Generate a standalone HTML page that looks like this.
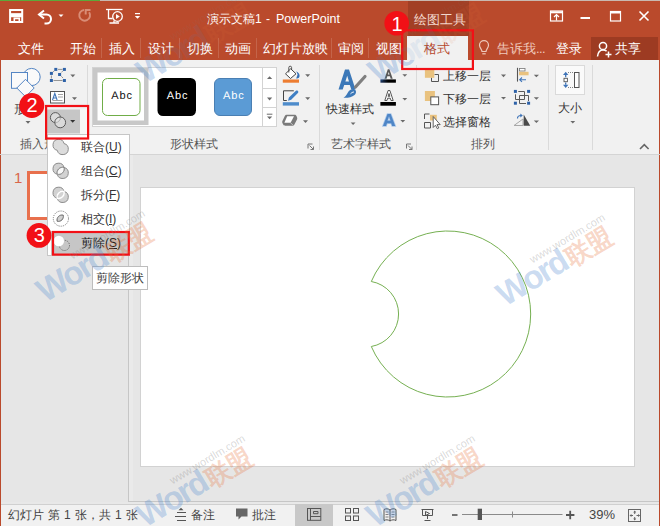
<!DOCTYPE html>
<html><head><meta charset="utf-8">
<style>
*{margin:0;padding:0;box-sizing:border-box}
html,body{width:660px;height:526px;overflow:hidden;background:#E6E6E6;font-family:"Liberation Sans",sans-serif;font-size:12px;color:#444}
.a{position:absolute}
.t{position:absolute;white-space:nowrap;line-height:17px}
.w{color:#fff}
svg{position:absolute;overflow:visible}
</style></head><body>
<!-- title bar -->
<div class="a" style="left:0;top:0;width:660px;height:60px;background:#BA4A2C"></div>
<div class="a" style="left:0;top:0;width:100px;height:1px;background:#5DA83A"></div>
<div class="a" style="left:100px;top:0;width:560px;height:1px;background:#C9B8B0"></div>
<!-- contextual header -->
<div class="a" style="left:408px;top:1px;width:61px;height:35px;background:#A23F25"></div>
<div class="t" style="left:413.5px;top:11.5px;color:#F3D9CF;font-size:12.5px">绘图工具</div>
<!-- active tab -->
<div class="a" style="left:407px;top:36px;width:61px;height:24px;background:#F1F1F1"></div>
<div class="t" style="left:424px;top:39.5px;font-size:13px;color:#B7472A">格式</div>
<!-- title -->
<div class="t w" style="left:207px;top:11px">演示文稿1</div><div class="t w" style="left:266px;top:11px">-</div><div class="t w" style="left:276px;top:11px;font-size:12.5px">PowerPoint</div>
<!-- tabs -->
<div class="t w" style="left:18px;top:39.5px;font-size:13px">文件</div>
<div class="t w" style="left:70px;top:39.5px;font-size:13px">开始</div>
<div class="t w" style="left:109px;top:39.5px;font-size:13px">插入</div>
<div class="t w" style="left:148px;top:39.5px;font-size:13px">设计</div>
<div class="t w" style="left:187px;top:39.5px;font-size:13px">切换</div>
<div class="t w" style="left:225px;top:39.5px;font-size:13px">动画</div>
<div class="t w" style="left:263px;top:39.5px;font-size:13px">幻灯片放映</div>
<div class="t w" style="left:338px;top:39.5px;font-size:13px">审阅</div>
<div class="t w" style="left:376px;top:39.5px;font-size:13px">视图</div>
<div class="t" style="left:497px;top:39.5px;font-size:13px;color:#EFC9BC">告诉我<span style="letter-spacing:-.6px">...</span></div>
<div class="t w" style="left:556px;top:39.5px;font-size:13px">登录</div>
<div class="a" style="left:590.5px;top:37px;width:67px;height:22.5px;background:#9D3B22"></div>
<div class="t w" style="left:615px;top:39.5px;font-size:13px">共享</div>


<!-- title bar icons -->
<svg class="a" style="left:0;top:0" width="660" height="60" viewBox="0 0 660 60">
 <g fill="none" stroke="#fff">
  <path d="M10.1 10h12.1v12.1h-12.1z" stroke-width="2"/>
  <path d="M11 15.2h11" stroke-width="4.1"/>
  <path d="M14.3 22v-3.6h5v3.6" stroke-width="1.6"/>
  <path d="M44 10.5l-5 4 5 4" stroke-width="2"/>
  <path d="M39.5 14.5h7a4.5 4.5 0 0 1 0 9h-2" stroke-width="2"/>
 </g>
 <path d="M58.5 14.5h5l-2.5 2.5z" fill="#fff"/>
 <g fill="none" stroke="#D98C76" stroke-width="2">
  <path d="M89.1 12.2A5.4 5.4 0 1 1 84 9.9"/>
  <path d="M85.7 14.5V9.9h4.8"/>
 </g>
 <g fill="none" stroke="#fff" stroke-width="1.3">
  <path d="M106 9.5h16.5"/>
  <path d="M108.5 10v8.5h4"/>
  <circle cx="117.5" cy="16.5" r="4.8"/>
  <path d="M109.5 23h9.5M114 20.5v2.5"/>
 </g>
 <path d="M116 14v5l3.8-2.5z" fill="#fff"/>
 <path d="M135 13.6h5" stroke="#fff" stroke-width="1.2"/>
 <path d="M134.8 16h5.4l-2.7 2.8z" fill="#fff"/>
 <!-- window controls -->
 <g fill="none" stroke="#fff" stroke-width="1.2">
  <rect x="550.5" y="11" width="12" height="10"/>
  <path d="M550.5 12.3h12" stroke-width="2"/>
  <path d="M556.5 20.5v-5.5M554 17l2.5-2.5 2.5 2.5"/>
  <rect x="610.5" y="11.5" width="10" height="9.5"/>
  <path d="M610.5 12.5h10" stroke-width="2"/>
  <path d="M639.5 11.5l9 9M648.5 11.5l-9 9" stroke-width="1.6"/>
 </g>
 <rect x="580.5" y="17" width="9.5" height="2" fill="#fff"/>
 <!-- tab separators -->
 <g stroke="#C4644A" stroke-width="1">
  <path d="M101.5 38v20M140.5 38v20M179.5 38v20M218.5 38v20M256.5 38v20M331.5 38v20M368.5 38v20"/>
 </g>
 <!-- bulb -->
 <g fill="none" stroke="#EFC9BC" stroke-width="1.2">
  <path d="M482 51.5c0-2-2.5-3.5-2.5-6.3a4.5 4.5 0 0 1 9 0c0 2.8-2.5 4.3-2.5 6.3z"/>
  <path d="M482.3 53.8h3.4"/>
 </g>
 <!-- person -->
 <g fill="none" stroke="#fff" stroke-width="1.5">
  <circle cx="603" cy="46" r="3.6"/>
  <path d="M597.5 56.5c0.5-4.5 2.8-6.5 5.5-6.5 1.6 0 2.6 0.4 3.6 1.2"/>
  <path d="M608.5 51.5v6M605.5 54.5h6"/>
 </g>
</svg>

<!-- ribbon -->
<div class="a" style="left:0;top:60px;width:660px;height:94px;background:#F1F1F1;border-left:1px solid #BA4A2C;border-right:1px solid #BA4A2C"></div>
<div class="a" style="left:0;top:154px;width:660px;height:1px;background:#D4D4D4"></div>


<!-- ribbon icons -->
<svg class="a" style="left:0;top:0" width="660" height="160" viewBox="0 0 660 160">
 <!-- gallery -->
 <rect x="92.5" y="67.5" width="184" height="59" fill="#fff" stroke="#D3D3D3"/>
 <path d="M262.5 67.5v59M262.5 88.5h14M262.5 107.5h14" stroke="#D3D3D3"/>
 <rect x="93" y="68" width="55.5" height="57" fill="none" stroke="#C6C6C6" stroke-width="0"/>
 <path d="M93 68h55.5v57h-55.5z M97.5 72.5v48h46.5v-48z" fill="#C8C8C8" fill-rule="evenodd"/>
 <rect x="102.5" y="78.5" width="37.5" height="37" rx="5" fill="#fff" stroke="#70AD47"/>
 <rect x="157.5" y="78" width="38.5" height="38" rx="5.5" fill="#000"/>
 <rect x="214.5" y="78.5" width="37" height="37" rx="5.5" fill="#5B9BD5" stroke="#4A7FB3"/>
 <!-- group separators -->
 <g stroke="#DADADA"><path d="M87.5 65v85M319.5 65v85M416.5 65v85M548.5 65v85M592.5 65v85"/></g>
 <!-- shapes big icon -->
 <g stroke="#5586C4" stroke-width="1" fill="#FAFAFA">
  <circle cx="31.6" cy="77" r="8.6"/>
  <rect x="11.5" y="72.5" width="16" height="15.8"/>
  <path d="M25.5 79.3l8.7 8.7-8.7 8.7-8.7-8.7z"/>
 </g>
 <path d="M25.5 121h5l-2.5 2.8z" fill="#6A6A6A"/>
 <!-- edit points -->
 <g stroke="#8A8A8A" stroke-width="0.9" fill="none">
  <path d="M58 69.4h4.5M53.5 80.5h9M51.4 75.5v3M53 72l1.5-1.3M62.8 71l-1.5 1.5M61.3 76.3l1.8 1.8"/>
 </g>
 <g fill="#2E62A8">
  <rect x="54.3" y="67.9" width="3" height="3"/><rect x="62.9" y="67.9" width="3" height="3"/>
  <rect x="49.9" y="71.9" width="3" height="3"/><rect x="58.1" y="73" width="3" height="3"/>
  <rect x="49.9" y="79" width="3" height="3"/><rect x="62.9" y="79" width="3" height="3"/>
 </g>
 <g fill="#6A6A6A">
  <path d="M70.3 74.5h5l-2.5 2.7z"/>
  <path d="M72 97.3h5l-2.5 2.7z"/>
  <path d="M70.2 120h5l-2.5 2.8z"/>
  <path d="M267 79h5.2l-2.6-2.8z"/>
  <path d="M267 97.6h5.2l-2.6 2.8z"/>
  <path d="M267 116.4h5.2l-2.6 2.8z"/>
  <path d="M305.2 74.3h5l-2.5 2.6z"/>
  <path d="M305.2 97.3h5l-2.5 2.6z"/>
  <path d="M303 120.3h5l-2.5 2.6z"/>
  <path d="M402.4 74.3h4.8l-2.4 2.5z"/>
  <path d="M402.4 98h4.8l-2.4 2.5z"/>
  <path d="M400.4 120.1h4.8l-2.4 2.5z"/>
  <path d="M350.7 122.5h4.8l-2.4 2.5z"/>
  <path d="M501 74.6h5l-2.5 2.6z"/>
  <path d="M501 97h5l-2.5 2.6z"/>
  <path d="M533.8 74.7h5.2l-2.6 2.6z"/>
  <path d="M533.8 97.2h5.2l-2.6 2.6z"/>
  <path d="M533.8 120.5h5.2l-2.6 2.6z"/>
  <path d="M570.4 121h4.8l-2.4 2.5z"/>
 </g>
 <path d="M266.8 114.2h5.6" stroke="#6A6A6A" stroke-width="1"/>
 <!-- textbox icon -->
 <rect x="50.5" y="91.5" width="14" height="11.5" fill="#fff" stroke="#555" stroke-width="1"/>
 <path d="M52.5 100l2.3-6.5 2.3 6.5M53.3 98h3" stroke="#3F74B8" stroke-width="1.1" fill="none"/>
 <path d="M58 94.5h5M58 97h5M52.5 100.5h10" stroke="#8A8A8A" stroke-width="0.8"/>
 <!-- merge button -->
 <rect x="47" y="109.5" width="40" height="28" fill="#F7F7F7"/>
 <rect x="47" y="109.5" width="33" height="24" fill="#C6C6C6"/>
 <g stroke="#5A5A5A" stroke-width="1" fill="#E8E8E8" fill-opacity="0.6">
  <circle cx="55.4" cy="117.6" r="5"/>
  <circle cx="60.2" cy="122.4" r="5.4"/>
 </g>
 <path d="M70.2 120h5l-2.5 2.8z" fill="#333"/>
 <!-- fill icon -->
 <path d="M290.7 68.8L296 73.8 290.5 78.5 285.5 73.8z" fill="#fff" stroke="#444" stroke-width="1"/>
 <path d="M288.8 72.5V67.6a1.4 1.4 0 0 1 2.8 0V70" fill="none" stroke="#444" stroke-width="0.9"/>
 <path d="M296.3 71.3Q300.3 73.5 299.4 77Q298.8 78.8 296.2 78.4L297.6 74.6z" fill="#3570B8"/>
 <rect x="282.8" y="79.5" width="16.2" height="3.2" fill="#ED7D31"/>
 <!-- outline icon -->
 <path d="M293.8 90.8h-10.3v9.7h3.3" fill="none" stroke="#444" stroke-width="1"/>
 <path d="M288 100.8l.9-3.3 6.8-6.5c.7-.6 1.7-.6 2.2 0 .6.6.6 1.5 0 2.1l-6.7 6.6z" fill="#3F7FC4"/>
 <rect x="282.8" y="102.2" width="16.2" height="3.4" fill="#4E8CCB"/>
 <!-- effects icon -->
 <path d="M286.5 114.8h8c1 0 1.6.5 2 1.2l.6 1.4c.3.8.2 1.4-.1 2.1l-2.6 5c-.4.8-1 1.2-2 1.2h-7.2c-1 0-1.6-.4-2-1.2l-.8-1.6c-.3-.7-.3-1.3 0-2l2.4-4.8c.4-.8 1-1.3 1.7-1.3z" fill="#7A7A7A"/>
 <path d="M287.2 116.2h6.8l-3.4 6.6h-6.2z" fill="#fff"/>
 <path d="M290.8 123l2 2" stroke="#D8D8D8" stroke-width="0.8"/>
 <!-- launchers -->
 <g fill="none" stroke="#777" stroke-width="1">
  <path d="M308 148.5v-4.5h4.5M309.5 145.5l4 4M313.5 146.5v3h-3"/>
  <path d="M406.5 148.5v-4.5h4.5M408 145.5l4 4M412 146.5v3h-3"/>
 </g>
 <path d="M640 149l4.3-4.3 4.3 4.3" fill="none" stroke="#666" stroke-width="1.6"/>
 <!-- big A quick styles -->
 <path d="M338.5 89.5l6.5-20h4l6.5 20h-4.2l-1.5-4.5h-5.6l-1.5 4.5z M345.4 81.5h3.6l-1.8-5.8z" fill="#3C78B8" fill-rule="evenodd"/>
 <path d="M365 76.5l-9.5 10.5" stroke="#7F7F7F" stroke-width="3.2" stroke-linecap="round"/>
 <path d="M343.5 97.8c2.5-1.2 3.5-4 5-6.2 1.6-2 4-3.2 6.2-2.2 2 1.2 1.6 4-0.2 5.6-2.6 2.4-6.8 3-11 2.8z" fill="#3C78B8"/>
 <path d="M350.5 93.8c1-1 2.2-1.8 3.4-1.8" stroke="#fff" stroke-width="1" fill="none"/>
 <!-- text fill A -->
 <path d="M384.5 78.8l3.3-9.5h1.6l3.3 9.5h-2l-.8-2.5h-2.6l-.8 2.5z M387.9 74.6h1.6l-.8-2.7z" fill="#595959" fill-rule="evenodd"/>
 <defs><linearGradient id="gb" x1="0" x2="1"><stop offset="0" stop-color="#1F3864"/><stop offset=".5" stop-color="#000"/><stop offset="1" stop-color="#000"/></linearGradient></defs>
 <rect x="380.4" y="79.4" width="15.5" height="3.3" fill="url(#gb)"/>
 <!-- text outline A -->
 <path d="M384.8 100.5l3.3-10h1.8l3.3 10h-2.2l-.7-2.3h-2.6l-.7 2.3z M388.1 96.3h1.8l-.9-2.8z" fill="#fff" stroke="#444" stroke-width="0.9" fill-rule="evenodd"/>
 <rect x="380.4" y="102" width="15.5" height="3.7" fill="#000"/>
 <!-- text effects A -->
 <path d="M383 126l4.5-12h3.2l4.5 12h-3l-1-2.8h-4.2l-1 2.8z M387.4 120.8h3.2l-1.6-4.5z" fill="#4F86C6" stroke="#A9C7EA" stroke-width="1.6" fill-rule="evenodd" paint-order="stroke"/>
 <!-- arrange icons -->
 <path d="M431.5 77.5v4h7v-7h-4" fill="none" stroke="#555" stroke-width="1"/>
 <rect x="424.9" y="69.6" width="9.4" height="8.2" fill="#E9C27F"/>
 <rect x="424.9" y="91" width="10" height="10" fill="#E9C27F"/>
 <rect x="430.8" y="96.9" width="7.8" height="7.8" fill="#fff" stroke="#555" stroke-width="1"/>
 <path d="M429.5 114h-5v5M424.5 122.5v5.5h6v-5.5h-6" fill="none" stroke="#555" stroke-width="1"/>
 <rect x="430" y="114.8" width="6.8" height="5.7" fill="#E9C27F"/>
 <path d="M433.2 116.5v11l2.3-2.3 1.8 3.5 1.5-.8-1.8-3.3h3.2z" fill="#fff" stroke="#555" stroke-width="0.9"/>
 <!-- align -->
 <path d="M517.5 67.8v13.8" stroke="#555" stroke-width="1.1"/>
 <rect x="519.5" y="68.5" width="5.5" height="2.5" fill="#fff" stroke="#777" stroke-width="0.8"/>
 <rect x="519" y="71.8" width="9.6" height="3.5" fill="#E9C27F"/>
 <path d="M526 79.7h-6M522 77.5l-2.3 2.2 2.3 2.2" fill="none" stroke="#3F74B8" stroke-width="1.1"/>
 <!-- group -->
 <path d="M518.3 91.5h6.2v8h-9v-5.2M526 103.5h-6.5v-8h9v5.5" fill="none" stroke="#5A5A5A" stroke-width="1"/>
 <g fill="#2E62A8"><rect x="513.9" y="89.9" width="3" height="3"/><rect x="527.1" y="89.9" width="3" height="3"/><rect x="513.9" y="101.7" width="3" height="3"/><rect x="527.1" y="101.7" width="3" height="3"/></g>
 <!-- rotate -->
 <path d="M514 125.5l9-6.5v6.5z" fill="none" stroke="#A8A8A8" stroke-width="1"/>
 <path d="M523.7 114.5v11.2h6.5z" fill="#4A4A4A"/>
 <path d="M517.5 118.5c0-2 1.3-3 3.5-3" fill="none" stroke="#3F74B8" stroke-width="1.2"/>
 <path d="M520.3 113.5l2.5 2-2.5 2z" fill="#3F74B8"/>
 <!-- size -->
 <rect x="555.5" y="65.5" width="29" height="29" fill="#FAFAFA" stroke="#DADADA"/>
 <g fill="#3F74B8"><path d="M563 75l2.7-3.2 2.7 3.2z"/><path d="M563 84.8l2.7 3.2 2.7-3.2z"/></g>
 <path d="M565.7 75v2.3M565.7 82.5v2.3" stroke="#3F74B8" stroke-width="1.3"/>
 <rect x="564" y="78.3" width="3.4" height="3.4" fill="#fff" stroke="#555" stroke-width="0.9"/>
 <path d="M568 72.5h6M568 87.5h6" stroke="#777" stroke-width="0.9" stroke-dasharray="1 1"/>
 <rect x="574.5" y="72.5" width="4.5" height="15" fill="#fff" stroke="#555" stroke-width="1"/>
</svg>
<div class="t" style="left:14px;top:100.5px;font-size:12.2px">形状</div>
<div class="t" style="left:20px;top:136px;color:#555;font-size:12.2px">插入形状</div>
<div class="t" style="left:170px;top:136px;color:#555;font-size:12.2px">形状样式</div>
<div class="t" style="left:330.5px;top:136px;color:#555;font-size:12.2px">艺术字样式</div>
<div class="t" style="left:471px;top:136px;color:#555;font-size:12.2px">排列</div>
<div class="t" style="left:326px;top:100.5px;color:#333;font-size:12.2px">快速样式</div>
<div class="t" style="left:443px;top:67.5px;color:#333;font-size:12.2px">上移一层</div>
<div class="t" style="left:443px;top:90.5px;color:#333;font-size:12.2px">下移一层</div>
<div class="t" style="left:443px;top:113.5px;color:#333;font-size:12.2px">选择窗格</div>
<div class="t" style="left:558px;top:99.5px;color:#333;font-size:12.2px">大小</div>
<svg class="a" style="left:0;top:0" width="660" height="160"><g font-family="Liberation Sans" font-size="11" letter-spacing=".9" text-rendering="geometricPrecision"><text x="111.2" y="98.6" fill="#111">Abc</text><text x="166.8" y="98.6" fill="#fff">Abc</text><text x="223" y="98.6" fill="#fff">Abc</text></g></svg>

<!-- workspace -->
<div class="a" style="left:0;top:155px;width:1px;height:371px;background:#BA4A2C"></div>
<div class="a" style="left:659px;top:155px;width:1px;height:371px;background:#BA4A2C"></div>
<div class="a" style="left:128px;top:155px;width:1px;height:347px;background:#C6C6C6"></div><div class="a" style="left:129px;top:155px;width:4px;height:347px;background:#EAEAEA"></div><div class="a" style="left:128px;top:501px;width:531px;height:1px;background:#C6C6C6"></div>
<div class="a" style="left:140px;top:187px;width:495px;height:280px;background:#fff;border:1px solid #D2D2D2"></div>

<!-- status bar -->
<div class="a" style="left:1px;top:502px;width:658px;height:2px;background:#E8E8E8"></div><div class="a" style="left:1px;top:504px;width:658px;height:22px;background:#F1F1F1;border-top:1px solid #D0D0D0"></div>

<div class="t" style="left:7.5px;top:507px;letter-spacing:.3px">幻灯片 第 1 张，共 1 张</div>
<div class="t" style="left:191px;top:507px">备注</div>
<div class="t" style="left:251.8px;top:507px">批注</div>
<div class="a" style="left:295px;top:504px;width:38px;height:22px;background:#C8C8C8"></div>
<div class="t" style="left:589px;top:506px;font-size:13px;color:#444">39%</div>
<!-- slide thumbnail -->
<div class="t" style="left:14px;top:168.5px;color:#D9674A;font-size:15px;line-height:18px">1</div>
<div class="a" style="left:27px;top:171px;width:80px;height:49px;background:#fff;border:3px solid #E8704D"></div>
<!-- shape -->
<svg class="a" style="left:0;top:0" width="660" height="526" viewBox="0 0 660 526">
 <path d="M371.3 281.5A83 83 0 1 1 371.3 346.5A33 33 0 0 0 371.3 281.5z" fill="none" stroke="#76B052" stroke-width="1"/>
 <!-- status icons -->
 <g stroke="#555" stroke-width="1" fill="none">
  <path d="M177 512.5h9M175 516.5h11M177 520.5h9"/>
 </g>
 <path d="M178.5 510.3l2.5-2.5 2.5 2.5z" fill="#555"/>
 <path d="M236 508.5h11.5v8h-6l-3 3v-3h-2.5z" fill="#666"/>
 <g fill="none" stroke="#555" stroke-width="1">
  <rect x="307.5" y="508.5" width="13.3" height="11.8"/>
  <path d="M310.5 508.5v11.8M310.5 516.5h10.3M313.5 511.5h4.5v2.2h-4.5z"/>
  <rect x="345.5" y="508.5" width="5" height="4.5"/><rect x="353.5" y="508.5" width="5" height="4.5"/>
  <rect x="345.5" y="516" width="5" height="4.5"/><rect x="353.5" y="516" width="5" height="4.5"/>
  <path d="M384 509.5c2-1 4-1 6 0.5c2-1.5 4-1.5 6-0.5v11c-2-1-4-1-6 0.5c-2-1.5-4-1.5-6-0.5z M390 510v11"/>
  <path d="M385.5 512h3M385.5 514.5h3M385.5 517h3M391.5 512h3M391.5 514.5h3M391.5 517h3" stroke-width="0.7"/>
  <path d="M421.5 509.5h12M422.5 509.5v6h10v-6M427.5 515.5v3.5M424.5 520.5h6M425.5 511.5l4 2-4 2z" />
 </g>
 <path d="M452 515h5.5" stroke="#555" stroke-width="1.6"/>
 <path d="M462 514.5h100.5" stroke="#8A8A8A" stroke-width="1"/>
 <path d="M512.5 511.5v6" stroke="#8A8A8A" stroke-width="1"/>
 <rect x="477.7" y="508.7" width="4.3" height="11.3" fill="#555"/>
 <path d="M566 515h8.4M570.2 510.8v8.4" stroke="#555" stroke-width="1.8"/>
 <g fill="none" stroke="#666" stroke-width="1">
  <rect x="628.5" y="509.5" width="12" height="12"/>
  <path d="M634.7 511v3M634.7 517v3M630 515.5h3M636.5 515.5h3"/>
 </g>
 <g fill="#666"><path d="M633.2 512.5l1.5-2 1.5 2zM633.2 518.5l1.5 2 1.5-2zM631.5 514l-2 1.5 2 1.5zM638 514l2 1.5-2 1.5z"/>
 </g>
</svg>


<!-- dropdown menu -->
<div class="a" style="left:47px;top:134px;width:83px;height:122px;background:#fff;border:1px solid #C6C6C6"></div>
<div class="a" style="left:51px;top:231px;width:78px;height:24px;background:#C6C6C6"></div>
<svg class="a" style="left:0;top:0" width="660" height="526" viewBox="0 0 660 526">
 <!-- union -->
 <path d="M64.04 143.56 A5.6 5.6 0 1 0 57.26 150.34 A5.6 5.6 0 1 0 64.04 143.56 z" fill="#DCDCDC" stroke="#8C8C8C"/>
 <!-- combine -->
 <path d="M64.04 167.46 A5.6 5.6 0 1 0 57.26 174.24 A5.6 5.6 0 0 1 64.04 167.46 z" fill="#D2D2D2" stroke="#8C8C8C"/>
 <path d="M64.04 167.46 A5.6 5.6 0 1 1 57.26 174.24 A5.6 5.6 0 0 0 64.04 167.46 z" fill="#D2D2D2" stroke="#8C8C8C"/>
 <path d="M64.04 167.46 A5.6 5.6 0 0 1 57.26 174.24 A5.6 5.6 0 0 1 64.04 167.46 z" fill="#F8F8F8" stroke="#8C8C8C"/>
 <!-- fragment -->
 <g stroke="#fff" stroke-width="1.4" fill="#D2D2D2">
 <path d="M64.04 191.46 A5.6 5.6 0 1 0 57.26 198.24 A5.6 5.6 0 0 1 64.04 191.46 z" stroke="#8C8C8C" stroke-width="1"/>
 <path d="M64.04 191.46 A5.6 5.6 0 1 1 57.26 198.24 A5.6 5.6 0 0 0 64.04 191.46 z" stroke="#8C8C8C" stroke-width="1"/>
 <path d="M64.04 191.46 A5.6 5.6 0 0 1 57.26 198.24 A5.6 5.6 0 0 1 64.04 191.46 z" fill="#D2D2D2"/>
 </g>
 <path d="M64.04 191.46 A5.6 5.6 0 0 1 57.26 198.24 A5.6 5.6 0 0 1 64.04 191.46 z" fill="none" stroke="#8C8C8C" stroke-width="0.8" transform="translate(0 0)" opacity="0"/>
 <!-- intersect -->
 <circle cx="60.9" cy="218.6" r="7.6" fill="none" stroke="#777" stroke-dasharray="1.1 1.1"/>
 <path d="M63.24 215.16 A5 5 0 0 1 57.16 221.24 A5 5 0 0 1 63.24 215.16 z" fill="#D0D0D0" stroke="#666"/>
 <!-- subtract -->
 <circle cx="64.4" cy="245.4" r="5.1" fill="none" stroke="#666" stroke-dasharray="1.1 1.1"/>
 <circle cx="58.8" cy="241" r="5.3" fill="#fff"/>
</svg>
<div class="t" style="left:81px;top:138.5px;color:#333">联合<span style="font-size:12px">(<u>U</u>)</span></div>
<div class="t" style="left:81px;top:162.5px;color:#333">组合<span style="font-size:12px">(<u>C</u>)</span></div>
<div class="t" style="left:81px;top:186.5px;color:#333">拆分<span style="font-size:12px">(<u>F</u>)</span></div>
<div class="t" style="left:81px;top:210.5px;color:#333">相交<span style="font-size:12px">(<u>I</u>)</span></div>
<div class="t" style="left:81px;top:234.5px;color:#222">剪除<span style="font-size:12px">(<u>S</u>)</span></div>
<!-- tooltip -->
<div class="a" style="left:92px;top:266px;width:56px;height:24px;background:#fff;border:1px solid #BDBDBD"></div>
<div class="t" style="left:96px;top:269.5px;color:#444">剪除形状</div>
<!-- annotations -->
<svg class="a" style="left:0;top:0" width="660" height="526" viewBox="0 0 660 526">
 <g fill="none" stroke="#F21016" stroke-width="2.2">
  <rect x="402.2" y="30.3" width="70.7" height="38.7"/>
  <rect x="46.1" y="106" width="42" height="32.5"/>
  <rect x="53" y="232" width="75.8" height="22.6"/>
 </g>
 <g fill="#F21016">
  <circle cx="396.7" cy="23.3" r="12.3"/>
  <circle cx="31.8" cy="105.5" r="12.5"/>
  <circle cx="39" cy="235.4" r="12.4"/>
 </g>
</svg>
<div class="t" style="left:391.5px;top:12.5px;color:#fff;font-size:20px;line-height:22px">1</div>
<div class="t" style="left:26.5px;top:93.5px;color:#fff;font-size:20px;line-height:22px">2</div>
<div class="t" style="left:33.8px;top:224.3px;color:#fff;font-size:20px;line-height:22px">3</div>

<!-- watermarks -->
<svg class="a" style="left:0;top:0" width="660" height="526" viewBox="0 0 660 526">
 <defs>
  <g id="wm">
   <text x="0" y="0" font-family="Liberation Sans" font-weight="bold" font-size="33" fill="#4A86D0" fill-opacity="0.3" letter-spacing="-2">Word</text>
   <text x="78" y="0" font-family="Liberation Sans" font-weight="bold" font-size="25" fill="#E8763F" fill-opacity="0.3">联盟</text>
   <text x="46" y="-23" font-family="Liberation Sans" font-size="11" fill="#808080" fill-opacity="0.3">www.wordlm.com</text>
  </g>
 </defs>
 <clipPath id="cl"><rect x="0" y="0" width="660" height="60"/></clipPath>
 <clipPath id="cr"><rect x="0" y="60" width="660" height="100"/></clipPath>
 <g clip-path="url(#cr)">
 <use href="#wm" transform="translate(145,84) rotate(-31)"/>
 <use href="#wm" transform="translate(377,84) rotate(-31)"/>
 </g>
 <g clip-path="url(#cl)" opacity="0.35">
 <use href="#wm" transform="translate(145,84) rotate(-31)"/>
 <use href="#wm" transform="translate(377,84) rotate(-31)"/>
 </g>
 <use href="#wm" transform="translate(45,303) rotate(-31)"/>
 <use href="#wm" transform="translate(505,307) rotate(-31)"/>
 <use href="#wm" transform="translate(145,528) rotate(-31)"/>
 <use href="#wm" transform="translate(375,528) rotate(-31)"/>
</svg>
</body></html>
